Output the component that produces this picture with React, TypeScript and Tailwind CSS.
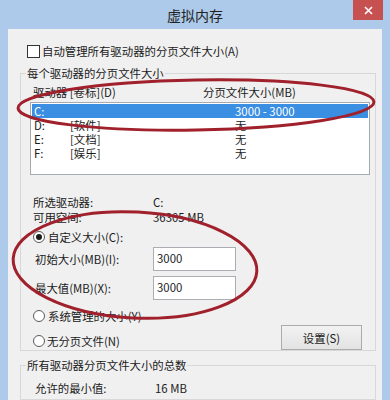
import React from 'react';

const rows = [
  { drive: 'C:', label: '', size: '3000 - 3000', selected: true },
  { drive: 'D:', label: '[软件]', size: '无' },
  { drive: 'E:', label: '[文档]', size: '无' },
  { drive: 'F:', label: '[娱乐]', size: '无' },
];

function Radio({ checked }: { checked?: boolean }) {
  return (
    <div className="w-[12px] h-[12px] rounded-full border border-[#5a5a5a] bg-white flex items-center justify-center shrink-0">
      {checked && <div className="w-[6px] h-[6px] rounded-full bg-[#1a1a1a]" />}
    </div>
  );
}

export default function App() {
  return (
    <div className="relative w-[390px] h-[400px] overflow-hidden bg-[#adcaea] text-[11.4px] leading-[14px] text-[#1a1a1a] font-['Noto_Sans_CJK_SC','Microsoft_YaHei',sans-serif]">
      {/* title bar */}
      <div className="h-[29px] grid grid-cols-[1fr_auto_1fr]">
        <div />
        <div className="pt-[6px] text-[14px] leading-[18px] text-[#222]">虚拟内存</div>
        <div className="flex justify-end pr-[7px]">
          <div className="w-[30px] h-[20px] bg-[#c75050] flex items-center justify-center">
            <svg width="9" height="9" viewBox="0 0 9 9">
              <path d="M1 1L8 8M8 1L1 8" stroke="white" strokeWidth="1.6" />
            </svg>
          </div>
        </div>
      </div>

      {/* client area */}
      <div className="mx-[8px] h-[371px] bg-[#f0f0f0] flex flex-col">
        <div className="mt-[15px] ml-[19px] h-[14px] flex items-center gap-[2px]">
          <div className="w-[13px] h-[13px] border border-[#333] bg-white shrink-0" />
          <span>自动管理所有驱动器的分页文件大小(A)</span>
        </div>

        {/* group 1 */}
        <div className="mt-[15px] ml-[12px] w-[356px] h-[282px] border border-[#d8d8d8] flex flex-col">
          <div className="-mt-[8px] ml-[5px] w-fit bg-[#f0f0f0] px-[1px]">每个驱动器的分页文件大小</div>

          <div className="mt-[5px] pl-[12px] flex">
            <span className="w-[170px]">驱动器 [卷标](D)</span>
            <span>分页文件大小(MB)</span>
          </div>

          <div className="mt-[3px] ml-[9px] w-[340px] h-[73px] border border-[#a5a9b0] bg-white pt-[1px]">
            {rows.map((r) => (
              <div
                key={r.drive}
                className={
                  r.selected
                    ? 'mx-[1px] h-[14px] flex pl-[2px] bg-[#3a8fe3] text-white'
                    : 'mx-[1px] h-[14px] flex pl-[2px]'
                }
              >
                <span className="w-[36px]">{r.drive}</span>
                <span className="w-[165px]">{r.label}</span>
                <span>{r.size}</span>
              </div>
            ))}
          </div>

          <div className="mt-[20px] pl-[12px] flex">
            <span className="w-[120px]">所选驱动器:</span>
            <span>C:</span>
          </div>
          <div className="mt-[1px] pl-[12px] flex">
            <span className="w-[120px]">可用空间:</span>
            <span>36305 MB</span>
          </div>

          <div className="mt-[6px] ml-[12px] h-[14px] flex items-center gap-[3px]">
            <Radio checked />
            <span>自定义大小(C):</span>
          </div>

          <div className="mt-[3px] ml-[14px] flex items-center">
            <span className="w-[118px]">初始大小(MB)(I):</span>
            <div className="w-[83px] h-[24px] border border-[#abadb3] bg-white pl-[3px] pb-[3px] flex items-center">3000</div>
          </div>
          <div className="mt-[5px] ml-[14px] flex items-center">
            <span className="w-[118px]">最大值(MB)(X):</span>
            <div className="w-[83px] h-[24px] border border-[#abadb3] bg-white pl-[3px] pb-[3px] flex items-center">3000</div>
          </div>

          <div className="mt-[9px] ml-[12px] h-[14px] flex items-center gap-[3px]">
            <Radio />
            <span>系统管理的大小(Y)</span>
          </div>

          <div className="mt-[2px] flex items-start">
            <div className="mt-[9px] ml-[12px] h-[14px] flex items-center gap-[2px]">
              <Radio />
              <span>无分页文件(N)</span>
            </div>
            <div className="ml-auto mr-[13px] w-[81px] h-[25px] border border-[#acacac] bg-gradient-to-b from-[#f2f2f2] to-[#e3e3e3] flex items-center justify-center">
              设置(S)
            </div>
          </div>
        </div>

        {/* group 2 */}
        <div className="mt-[14px] ml-[12px] w-[356px] h-[60px] border border-[#d8d8d8] flex flex-col">
          <div className="-mt-[8px] ml-[5px] w-fit bg-[#f0f0f0] px-[1px]">所有驱动器分页文件大小的总数</div>
          <div className="mt-[9px] pl-[14px] flex">
            <span className="w-[120px]">允许的最小值:</span>
            <span>16 MB</span>
          </div>
        </div>
      </div>

      {/* red marker circles drawn over the screenshot */}
      <svg className="absolute inset-0 pointer-events-none" width="390" height="400" viewBox="0 0 390 400">
        <ellipse cx="196" cy="105" rx="178" ry="25" fill="none" stroke="#a0202c" strokeWidth="3" transform="rotate(-1 196 105)" />
        <ellipse cx="135" cy="265" rx="122" ry="53" fill="none" stroke="#a0202c" strokeWidth="3" transform="rotate(3 135 265)" />
      </svg>
    </div>
  );
}
